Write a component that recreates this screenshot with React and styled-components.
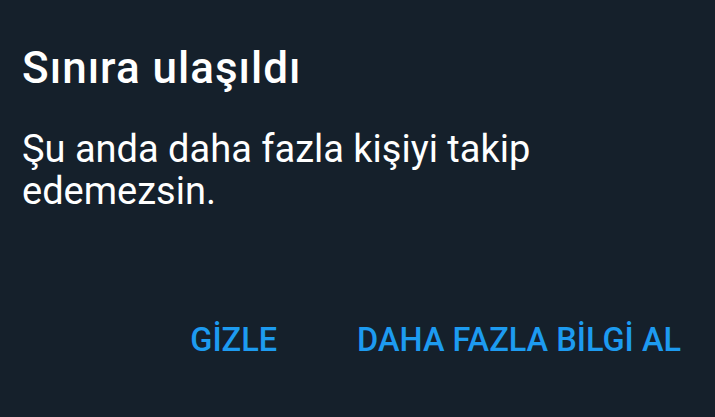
import React from "react";
import styled, { createGlobalStyle } from "styled-components";

const Global = createGlobalStyle`
  html, body { margin: 0; padding: 0; background: #15202b; }
  body { font-family: Roboto, "Noto Sans", sans-serif; -webkit-font-smoothing: antialiased; }
`;

const Dialog = styled.div`
  width: 715px;
  height: 417px;
  box-sizing: border-box;
  background: #15202b;
  padding: 42px 34px 0 22px;
  display: flex;
  flex-direction: column;
`;

const Title = styled.h1`
  margin: 0;
  font-size: 44px;
  line-height: 52px;
  font-weight: 500;
  letter-spacing: 1px;
  color: #ffffff;
`;

const Message = styled.p`
  margin: 34px 0 0;
  font-size: 38px;
  line-height: 42px;
  font-weight: 400;
  color: #ffffff;
`;

const Actions = styled.div`
  margin-top: auto;
  margin-bottom: 58px;
  display: flex;
  justify-content: flex-end;
  gap: 80px;
`;

const ActionButton = styled.button`
  border: 0;
  background: none;
  padding: 0;
  font-family: inherit;
  font-size: 32.5px;
  line-height: 38px;
  font-weight: 500;
  color: #1d9bf0;
  cursor: pointer;
`;

export default function App() {
  return (
    <>
      <Global />
      <Dialog>
        <Title>Sınıra ulaşıldı</Title>
        <Message>
          Şu anda daha fazla kişiyi takip
          <br />
          edemezsin.
        </Message>
        <Actions>
          <ActionButton>GİZLE</ActionButton>
          <ActionButton>DAHA FAZLA BİLGİ AL</ActionButton>
        </Actions>
      </Dialog>
    </>
  );
}
